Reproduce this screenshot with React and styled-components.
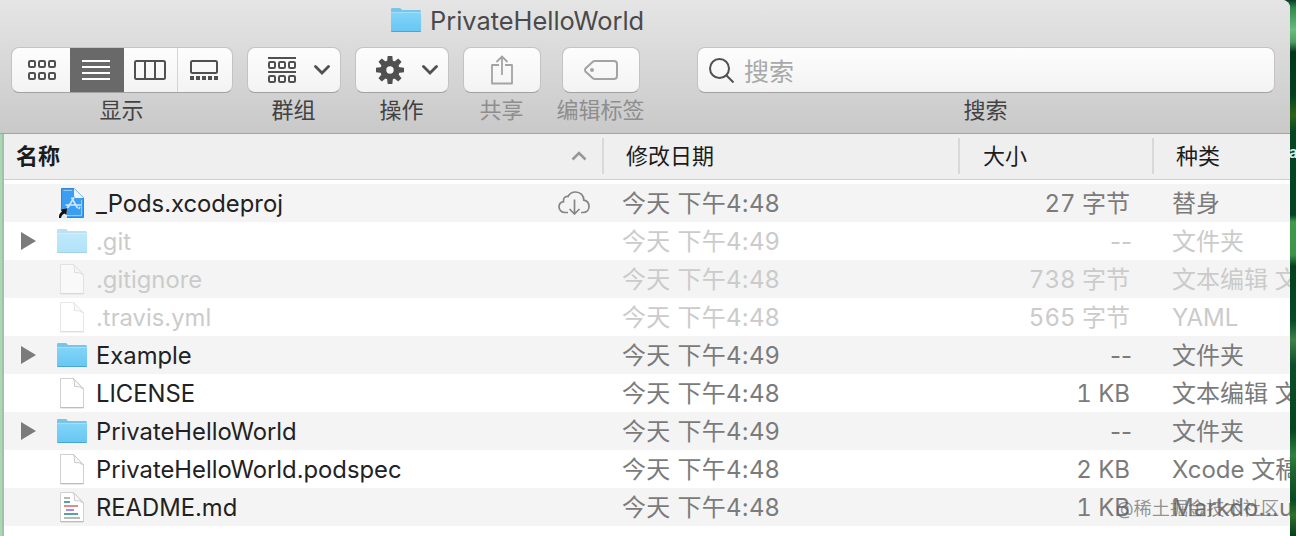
import React from 'react'
import styled, { createGlobalStyle } from 'styled-components'

const latin = "Inter, 'Noto Sans CJK SC', sans-serif"

const GlobalStyle = createGlobalStyle`
  * {
    box-sizing: border-box;
  }
  body {
    margin: 0;
    overflow: hidden;
    font-family: ${latin};
  }
`

const S_Desktop = styled.div`
  position: relative;
  width: 1296px;
  height: 536px;
  overflow: hidden;
  background: linear-gradient(
    180deg,
    #0b3d27 0,
    #2f8a4c 8px,
    #6abb80 30px,
    #4f9f63 42px,
    #03361c 52px,
    #03401f 95px,
    #2a6418 115px,
    #054522 132px,
    #044426 215px,
    #3f9a4a 222px,
    #3c9349 255px,
    #05401e 266px,
    #064a26 320px,
    #3f7f4b 340px,
    #0a4f2a 365px,
    #06461f 430px,
    #2f8040 455px,
    #1d6630 470px,
    #0a4a22 500px,
    #2f6f2c 515px,
    #063f1c 536px
  );
`
const S_Behind = styled.span`
  position: absolute;
  left: 1289px;
  top: 143px;
  font-size: 15px;
  font-weight: 600;
  line-height: 20px;
  color: #e2eee4;
`
const S_Window = styled.div`
  position: relative;
  width: 1290px;
  height: 536px;
  overflow: hidden;
  border-radius: 0 8px 0 0;
  background: #fff;
`
const S_Header = styled.header`
  height: 134px;
  padding-left: 4px;
  background: linear-gradient(180deg, #e5e5e5, #dedede 34px, #c9c9c9 133px);
  border-bottom: 1px solid #a3a3a3;
`
const S_Content = styled.main`
  height: 402px;
  padding-left: 4px;
  background: linear-gradient(90deg, #aed5b6 0 2px, #9cc5a8 2px 4px, #fff 4px);
`
const S_Title = styled.div`
  display: flex;
  height: 47px;
  padding: 7px 0 0 386px;
  gap: 8px;
  font-size: 25.4px;
  line-height: 28px;
  color: #4a4a4a;
`
const S_Toolbar = styled.div`
  display: flex;
  padding-left: 7px;
`
const S_Tool = styled.div`
  display: flex;
  flex-direction: column;
  align-items: center;
  width: ${p => p.$width}px;
  margin-right: ${p => p.$gap || 0}px;
`
const S_Buttons = styled.div`
  display: flex;
  width: 100%;
  height: 46px;
  border: 1px solid #c3c3c3;
  border-bottom-color: #a2a2a2;
  border-radius: 8px;
  background: linear-gradient(180deg, #fdfdfd, #f3f3f3);
  overflow: hidden;
`
const S_Segment = styled.div`
  display: flex;
  align-items: center;
  justify-content: center;
  width: ${p => p.$width}px;
  margin: ${p => (p.$active ? '-1px 0' : '0')};
  padding-left: ${p => p.$left || 0}px;
  padding-right: ${p => p.$right || 0}px;
  background: ${p => (p.$active ? '#696969' : 'transparent')};
  border-right: ${p => (p.$line ? '1px solid #d4d4d4' : 'none')};
`
const S_Single = styled(S_Buttons)`
  align-items: center;
  justify-content: center;
  padding-left: ${p => p.$left || 0}px;
  gap: ${p => p.$gap || 0}px;
`
const S_Search = styled(S_Buttons)`
  align-items: center;
  padding-left: 11px;
  gap: 9px;
  font-size: 25px;
  color: #a9a9a9;
`
const S_Label = styled.div`
  height: 32px;
  margin-top: 1px;
  padding-right: 1px;
  font-size: 22px;
  line-height: 32px;
  white-space: nowrap;
  color: ${p => (p.$dim ? '#8e8e8e' : '#424242')};
`

const columns = '600px 356px 194px 136px'

const S_Columns = styled.div`
  display: grid;
  grid-template-columns: ${columns};
  height: 46px;
  padding: 4px 0 5px;
  background: #efefef;
  border-bottom: 1px solid #cfcfcf;
`
const S_Column = styled.div`
  display: flex;
  align-items: center;
  justify-content: space-between;
  padding: 0 15px 0 ${p => p.$left}px;
  border-right: ${p => (p.$last ? 'none' : '2px solid #d9d9d9')};
  font-size: 22px;
  font-weight: ${p => (p.$sorted ? 700 : 400)};
  line-height: 32px;
  color: #1c1c1c;
`
const S_Rows = styled.div`
  padding-top: 4px;
`
const S_Row = styled.div`
  display: grid;
  grid-template-columns: ${columns};
  align-items: center;
  height: 38px;
  background: ${p => (p.$odd ? '#f4f4f4' : '#fff')};
  color: ${p => (p.$hidden ? '#cbcbcb' : '#7b7b7b')};
  font-size: 24px;
  line-height: 36px;
  white-space: nowrap;
`
const S_Name = styled.div`
  display: flex;
  align-items: center;
  height: 38px;
  padding: 0 14px 0 16px;
  color: ${p => (p.$hidden ? '#cbcbcb' : '#222')};
`
const S_Arrow = styled.div`
  display: flex;
  width: 36px;
`
const S_FileIcon = styled.div`
  display: flex;
  justify-content: center;
  width: 32px;
  margin-right: 8px;
  opacity: ${p => (p.$hidden ? 0.5 : 1)};
`
const S_FileName = styled.div`
  flex: 1;
  padding-top: 2px;
  font-size: 23.8px;
`
const S_Date = styled.div`
  padding: 2px 0 0 18px;
  letter-spacing: 0.25px;
`
const S_Size = styled.div`
  padding: 2px ${p => (p.$empty ? 22 : 24)}px 0 0;
  font-variant-numeric: ${p => (p.$empty ? 'normal' : 'tabular-nums')};
  text-align: right;
`
const S_Kind = styled.div`
  padding: 2px 0 0 18px;
  overflow: hidden;
`
const S_Watermark = styled.div`
  position: absolute;
  left: 1116px;
  top: 494px;
  font-size: 18.2px;
  line-height: 28px;
  white-space: nowrap;
  color: rgba(90, 90, 90, 0.65);
`

const FolderIcon = () => (
  <svg width="32" height="26" viewBox="0 0 32 26">
    <defs>
      <linearGradient id="folder" x1="0" y1="0" x2="0" y2="1">
        <stop offset="0" stopColor="#83d4f8" />
        <stop offset="1" stopColor="#66c7f3" />
      </linearGradient>
    </defs>
    <path d="M1 2.2Q1 1 2.2 1H9.5Q10.4 1 11 1.8L12 3H29.5Q31 3 31 4.5V8H1Z" fill="#79c5e8" />
    <path d="M1 5.5H31V23.5Q31 24.5 30 24.5H2Q1 24.5 1 23.5Z" fill="url(#folder)" />
    <path d="M1 5.5H31" stroke="#9fe0fb" />
    <path d="M1.2 24.5H30.8" stroke="#4aa5cf" />
  </svg>
)

const FileIcon = ({ lines }) => (
  <svg width="26" height="32" viewBox="0 0 26 32">
    <path d="M1.5 1.5H14.5L24.5 12V30.5H1.5Z" fill="#fff" stroke="#d0d0d0" strokeLinejoin="round" />
    <path d="M14.5 1.5Q16 5 15.5 9.5Q21 9 24.5 12Z" fill="#f8f8f8" stroke="#cacaca" strokeLinejoin="round" />
    <path d="M1.5 30.8H24.5" stroke="#b5b5b5" />
    {lines && (
      <g strokeWidth="2">
        <path d="M5 7H11M5 27H21" stroke="#b9b9b9" />
        <path d="M5 11H11M5 23H19" stroke="#4fa5a8" />
        <path d="M5 15H19" stroke="#e08c8c" />
        <path d="M7 19H15" stroke="#a98bea" />
      </g>
    )}
  </svg>
)

const ProjectIcon = () => (
  <svg width="30" height="32" viewBox="0 0 30 32">
    <path d="M4.5 1.5H17L26.5 11V30.5H4.5Z" fill="#3b9ef2" stroke="#3585d3" />
    <path d="M17 1.5L26.5 11H19Q17 11 17 9Z" fill="#eaf4fd" />
    <path d="M6.5 3.5H15M24.5 13V28.5H7" fill="none" stroke="#8ecbf9" />
    <path
      d="M14.5 10.5L20.5 21M17 10.5L11 20.5M8.5 18H24M10 21L11.5 19M21.5 22L23 20"
      fill="none"
      stroke="#cfe8ff"
      strokeWidth="1.6"
    />
    <path d="M1 22H10V31H1Z" fill="#fff" opacity=".8" />
    <path d="M2 31Q1.5 26.5 5 24.5L3.5 22.5L10 21.5L9.5 28L7.5 26.5Q4.5 27.5 4 31Z" fill="#111" />
  </svg>
)

const GridIcon = () => (
  <svg width="30" height="22" viewBox="0 0 30 22" fill="none" stroke="#505050" strokeWidth="2">
    {[2, 12, 22].map(x =>
      [2, 14].map(y => <rect key={`${x}-${y}`} x={x} y={y} width="6" height="6" rx="1.3" />)
    )}
  </svg>
)

const ListIcon = () => (
  <svg width="28" height="22" viewBox="0 0 28 22" stroke="#fff" strokeWidth="2">
    <path d="M0 2H28M0 8H28M0 14H28M0 20H28" />
  </svg>
)

const ColumnsIcon = () => (
  <svg width="32" height="22" viewBox="0 0 32 22" fill="none" stroke="#505050" strokeWidth="2">
    <rect x="1" y="2" width="30" height="18" rx="1.5" />
    <path d="M11 2V20M21 2V20" />
  </svg>
)

const GalleryIcon = () => (
  <svg width="28" height="22" viewBox="0 0 28 22" fill="none" stroke="#505050" strokeWidth="2">
    <rect x="1" y="2" width="26" height="12" rx="1.5" />
    <path d="M0 19H28" strokeWidth="4" strokeDasharray="4 2" />
  </svg>
)

const GroupIcon = () => (
  <svg width="28" height="28" viewBox="0 0 28 28" fill="none" stroke="#505050" strokeWidth="2">
    <path d="M0 2H28M0 16H28" />
    {[1, 11, 21].map(x =>
      [6, 20].map(y => <rect key={`${x}-${y}`} x={x} y={y} width="6" height="6" rx="1.3" />)
    )}
  </svg>
)

const GearIcon = () => (
  <svg width="28" height="28" viewBox="-14 -14 28 28" fill="#505050">
    {[0, 45, 90, 135, 180, 225, 270, 315].map(a => (
      <path key={a} d="M-3 -8L-2.3 -14H2.3L3 -8Z" transform={`rotate(${a})`} />
    ))}
    <circle r="6.7" fill="none" stroke="#505050" strokeWidth="6" />
  </svg>
)

const ChevronIcon = () => (
  <svg width="16" height="10" viewBox="0 0 16 10" fill="none" stroke="#505050" strokeWidth="2.8">
    <path d="M1.5 1.5L8 8L14.5 1.5" strokeLinecap="round" />
  </svg>
)

const ShareIcon = () => (
  <svg width="22" height="30" viewBox="0 0 22 30" fill="none" stroke="#a3a3a3" strokeWidth="1.8">
    <path d="M8 10H1V28.5H21V10H14" strokeLinejoin="round" />
    <path d="M11 20V1.5M5.5 7L11 1.5L16.5 7" />
  </svg>
)

const TagIcon = () => (
  <svg width="34" height="20" viewBox="0 0 34 20" fill="none" stroke="#a3a3a3" strokeWidth="2">
    <path d="M11 1H30Q33 1 33 4V16Q33 19 30 19H11Q9.5 19 8.5 18L1.5 11.5Q0.5 10 1.5 8.5L8.5 2Q9.5 1 11 1Z" />
    <circle cx="8" cy="10" r="2" fill="#a3a3a3" stroke="none" />
  </svg>
)

const SearchIcon = () => (
  <svg width="26" height="26" viewBox="0 0 26 26" fill="none" stroke="#505050" strokeWidth="2">
    <circle cx="10.5" cy="11.5" r="9.5" />
    <path d="M17.5 18.5L24.5 25.5" />
  </svg>
)

const SortIcon = () => (
  <svg width="16" height="10" viewBox="0 0 16 10" fill="none" stroke="#969696" strokeWidth="2.5">
    <path d="M1.5 8.5L8 2L14.5 8.5" />
  </svg>
)

const CloudIcon = () => (
  <svg width="32" height="24" viewBox="0 0 32 24" fill="none" stroke="#858585" strokeWidth="1.7">
    <path d="M10 21.5H7C3.5 21.5 1 19 1 16C1 13.2 2.8 11.2 5.5 10.7C4.8 7.5 7 5 10 5.5C11.5 2.7 14 1 17.5 1C22.5 1 26 4.5 25.8 9.2C29 9.8 31 12.4 31 15.5C31 19 28.5 21.5 25 21.5H23" />
    <path d="M16.5 8.5V23M11.5 18L16.5 23L21.5 18" />
  </svg>
)

const DisclosureIcon = () => (
  <svg width="16" height="18" viewBox="0 0 16 18">
    <path d="M1 0L16 9L1 18Z" fill="#7b7b7b" />
  </svg>
)

const icons = {
  project: <ProjectIcon />,
  folder: <FolderIcon />,
  file: <FileIcon />,
  markdown: <FileIcon lines />,
}

const files = [
  { name: '_Pods.xcodeproj', icon: 'project', date: '今天 下午4:48', size: '27 字节', kind: '替身', cloud: true },
  { name: '.git', icon: 'folder', date: '今天 下午4:49', size: '--', kind: '文件夹', hidden: true },
  { name: '.gitignore', icon: 'file', date: '今天 下午4:48', size: '738 字节', kind: '文本编辑 文稿', hidden: true },
  { name: '.travis.yml', icon: 'file', date: '今天 下午4:48', size: '565 字节', kind: 'YAML', hidden: true },
  { name: 'Example', icon: 'folder', date: '今天 下午4:49', size: '--', kind: '文件夹' },
  { name: 'LICENSE', icon: 'file', date: '今天 下午4:48', size: '1 KB', kind: '文本编辑 文稿' },
  { name: 'PrivateHelloWorld', icon: 'folder', date: '今天 下午4:49', size: '--', kind: '文件夹' },
  { name: 'PrivateHelloWorld.podspec', icon: 'file', date: '今天 下午4:48', size: '2 KB', kind: 'Xcode 文稿' },
  { name: 'README.md', icon: 'markdown', date: '今天 下午4:48', size: '1 KB', kind: 'Markdo...u' },
]

const FileRow = ({ file, odd }) => (
  <S_Row $odd={odd} $hidden={file.hidden}>
    <S_Name $hidden={file.hidden}>
      <S_Arrow>{file.icon === 'folder' && <DisclosureIcon />}</S_Arrow>
      <S_FileIcon $hidden={file.hidden}>{icons[file.icon]}</S_FileIcon>
      <S_FileName>{file.name}</S_FileName>
      {file.cloud && <CloudIcon />}
    </S_Name>
    <S_Date>{file.date}</S_Date>
    <S_Size $empty={file.size === '--'}>{file.size}</S_Size>
    <S_Kind>{file.kind}</S_Kind>
  </S_Row>
)

function App() {
  return (
    <S_Desktop>
      <GlobalStyle />
      <S_Behind>a</S_Behind>
      <S_Window>
        <S_Header>
          <S_Title>
            <FolderIcon />
            PrivateHelloWorld
          </S_Title>
          <S_Toolbar>
            <S_Tool $width={222} $gap={14}>
              <S_Buttons>
                <S_Segment $width={58} $left={2}>
                  <GridIcon />
                </S_Segment>
                <S_Segment $width={54} $right={2} $active>
                  <ListIcon />
                </S_Segment>
                <S_Segment $width={54} $right={1} $line>
                  <ColumnsIcon />
                </S_Segment>
                <S_Segment $width={54} $right={2}>
                  <GalleryIcon />
                </S_Segment>
              </S_Buttons>
              <S_Label>显示</S_Label>
            </S_Tool>
            <S_Tool $width={94} $gap={14}>
              <S_Single $gap={18} $left={10}>
                <GroupIcon />
                <ChevronIcon />
              </S_Single>
              <S_Label>群组</S_Label>
            </S_Tool>
            <S_Tool $width={94} $gap={14}>
              <S_Single $gap={18} $left={10}>
                <GearIcon />
                <ChevronIcon />
              </S_Single>
              <S_Label>操作</S_Label>
            </S_Tool>
            <S_Tool $width={78} $gap={21}>
              <S_Single>
                <ShareIcon />
              </S_Single>
              <S_Label $dim>共享</S_Label>
            </S_Tool>
            <S_Tool $width={78} $gap={57}>
              <S_Single>
                <TagIcon />
              </S_Single>
              <S_Label $dim>编辑标签</S_Label>
            </S_Tool>
            <S_Tool $width={578}>
              <S_Search>
                <SearchIcon />
                搜索
              </S_Search>
              <S_Label>搜索</S_Label>
            </S_Tool>
          </S_Toolbar>
        </S_Header>
        <S_Content>
          <S_Columns>
            <S_Column $left={12} $sorted>
              名称
              <SortIcon />
            </S_Column>
            <S_Column $left={22}>修改日期</S_Column>
            <S_Column $left={23}>大小</S_Column>
            <S_Column $left={22} $last>
              种类
            </S_Column>
          </S_Columns>
          <S_Rows>
            {files.map((file, i) => (
              <FileRow key={file.name} file={file} odd={i % 2 === 0} />
            ))}
          </S_Rows>
        </S_Content>
        <S_Watermark>@稀土掘金技术社区</S_Watermark>
      </S_Window>
    </S_Desktop>
  )
}

export default App
